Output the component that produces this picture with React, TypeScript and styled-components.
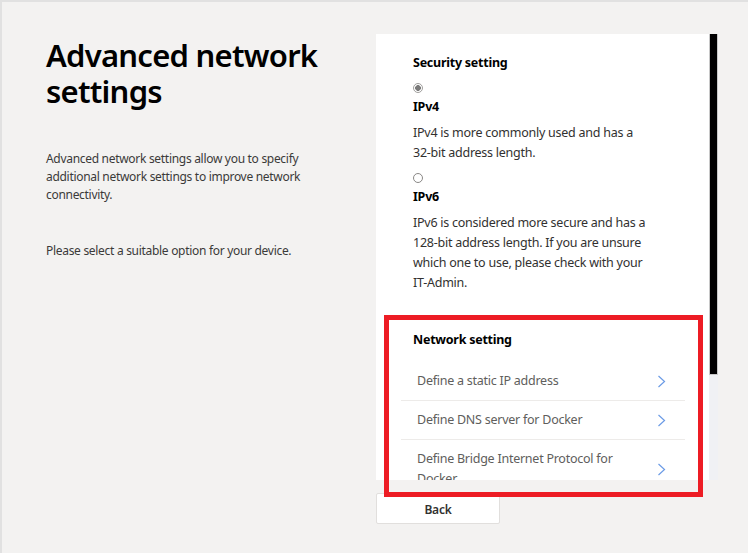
import React from "react";
import styled, { createGlobalStyle } from "styled-components";

const Global = createGlobalStyle`
  html, body { margin: 0; padding: 0; background: #f3f2f1; }
  body { font-family: "Noto Sans", "Open Sans", sans-serif; color: #323130; }
  * { box-sizing: border-box; }
`;

const Page = styled.div`
  position: relative;
  width: 748px;
  height: 553px;
  overflow: hidden;
  border-top: 2px solid #e1e1e1;
  border-left: 2px solid #e1e1e1;
  padding: 32px 0 0 44px;
  display: grid;
  grid-template-columns: 330px 342px;
  align-items: start;
`;

const Intro = styled.div`
  display: flex;
  flex-direction: column;
`;

const Heading = styled.h1`
  margin: 3px 0 0;
  font-size: 31px;
  line-height: 36px;
  letter-spacing: -0.75px;
  font-weight: 600;
  color: #000;
`;

const Lead = styled.p<{ $gap: number }>`
  margin: ${(p) => p.$gap}px 0 0;
  width: 262px;
  font-size: 12px;
  line-height: 18px;
  letter-spacing: -0.3px;
  color: #3b3a39;
`;

const Side = styled.div`
  display: flex;
  flex-direction: column;
`;

const Panel = styled.div`
  display: flex;
  height: 446px;
  background: #ffffff;
`;

const Scroller = styled.div`
  width: 333px;
  height: 100%;
  overflow: hidden;
  padding: 19px 24px 0 37px;
`;

const Track = styled.div`
  width: 9px;
  height: 100%;
  background: #f0f1f4;
`;

const Thumb = styled.div`
  width: 9px;
  height: 341px;
  background: #000;
  border: 1px solid #c8c8c8;
  border-top: none;
`;

const SectionTitle = styled.div<{ $gap?: number }>`
  margin-top: ${(p) => p.$gap ?? 0}px;
  font-size: 12.5px;
  line-height: 20px;
  letter-spacing: -0.25px;
  font-weight: 700;
  color: #000;
`;

const Radio = styled.span<{ $checked?: boolean }>`
  display: block;
  margin-top: 10px;
  width: 10px;
  height: 10px;
  border-radius: 50%;
  border: 1px solid ${(p) => (p.$checked ? "#a19f9d" : "#8a8886")};
  background: ${(p) =>
    p.$checked
      ? "radial-gradient(circle, #7a7a7a 0 2.6px, #ffffff 3.1px)"
      : "#ffffff"};
`;

const OptionLabel = styled.div`
  margin-top: 4px;
  font-size: 12.5px;
  line-height: 20px;
  letter-spacing: -0.25px;
  font-weight: 700;
  color: #000;
`;

const OptionText = styled.p`
  margin: 6px 0 0;
  width: 235px;
  font-size: 12.5px;
  line-height: 20px;
  letter-spacing: -0.25px;
  color: #323130;
`;

const List = styled.div`
  margin: 12px 0 0 -12px;
  display: flex;
  flex-direction: column;
`;

const Item = styled.div`
  display: flex;
  align-items: center;
  justify-content: space-between;
  padding: 9px 19px 9px 16px;
  border-bottom: 1px solid #edebe9;
  font-size: 12.5px;
  line-height: 20px;
  letter-spacing: -0.25px;
  color: #605e5c;
`;

const ItemText = styled.span`
  max-width: 215px;
`;

const Chevron = styled.svg`
  flex: none;
  width: 9px;
  height: 13px;
`;

const BackButton = styled.button`
  margin-top: 13px;
  width: 124px;
  height: 31px;
  background: #ffffff;
  border: 1px solid #e1dfdd;
  border-radius: 2px;
  font-family: "Noto Sans", sans-serif;
  font-size: 12px;
  letter-spacing: -0.2px;
  font-weight: 600;
  color: #323130;
  padding: 2px 0 0;
`;

const Highlight = styled.div`
  position: absolute;
  left: 382px;
  top: 313px;
  width: 319px;
  height: 182px;
  border: 5px solid #ed1c24;
  pointer-events: none;
`;

const items = [
  "Define a static IP address",
  "Define DNS server for Docker",
  "Define Bridge Internet Protocol for Docker",
];

const ChevronIcon = () => (
  <Chevron viewBox="0 0 9 13">
    <path d="M1.5 1 L7.5 6.5 L1.5 12" fill="none" stroke="#6b9be6" strokeWidth="1.2" />
  </Chevron>
);

export default function App() {
  return (
    <>
      <Global />
      <Page>
        <Intro>
          <Heading>Advanced network settings</Heading>
          <Lead $gap={41}>
            Advanced network settings allow you to specify additional network settings to improve
            network connectivity.
          </Lead>
          <Lead $gap={38}>Please select a suitable option for your device.</Lead>
        </Intro>
        <Side>
          <Panel>
            <Scroller>
              <SectionTitle>Security setting</SectionTitle>
              <Radio $checked />
              <OptionLabel>IPv4</OptionLabel>
              <OptionText>IPv4 is more commonly used and has a 32-bit address length.</OptionText>
              <Radio />
              <OptionLabel>IPv6</OptionLabel>
              <OptionText>
                IPv6 is considered more secure and has a 128-bit address length. If you are unsure
                which one to use, please check with your IT-Admin.
              </OptionText>
              <SectionTitle $gap={37}>Network setting</SectionTitle>
              <List>
                {items.map((t) => (
                  <Item key={t}>
                    <ItemText>{t}</ItemText>
                    <ChevronIcon />
                  </Item>
                ))}
              </List>
            </Scroller>
            <Track>
              <Thumb />
            </Track>
          </Panel>
          <BackButton>Back</BackButton>
        </Side>
        <Highlight />
      </Page>
    </>
  );
}
